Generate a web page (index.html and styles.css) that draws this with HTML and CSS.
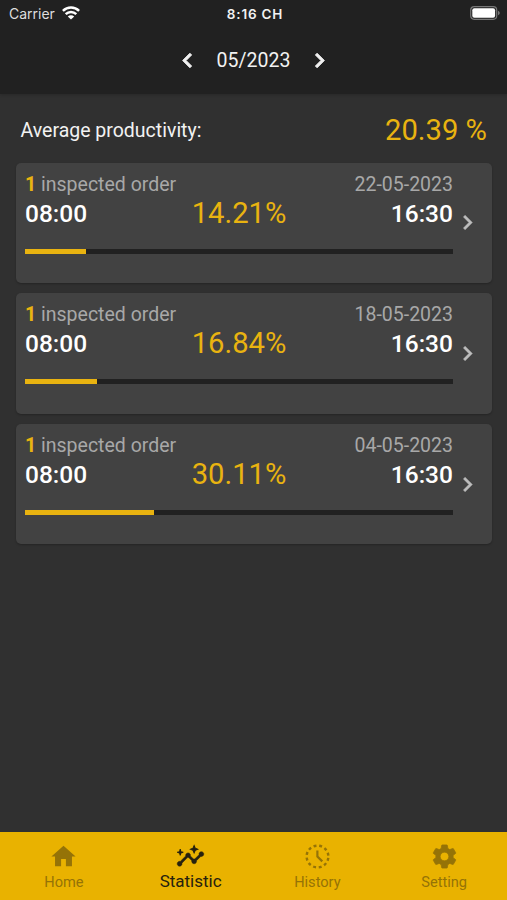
FILE: index.html
```
<!DOCTYPE html>
<html lang="en">
<head>
    <meta charset="UTF-8">
    <meta name="viewport" content="width=device-width, initial-scale=1.0">
    <title>Statistic</title>
    <link rel="stylesheet" href="styles.css">
</head>
<body>
    <header class="header">
        <div class="status-bar">
            <div class="carrier">
                <span>Carrier</span>
                <svg class="wifi" viewBox="0 0 18 14">
                    <path d="M.9 4.8C5.5 .4 12.5 .4 17.1 4.8M3.7 8.1c3-2.9 7.6-2.9 10.6 0" fill="none" stroke="#fff" stroke-width="2.5"/>
                    <path d="M9 13.6l-3.2-3.2c1.8-1.6 4.6-1.6 6.4 0z" fill="#fff"/>
                </svg>
            </div>
            <div class="clock">8:16 CH</div>
            <svg class="battery" viewBox="0 0 30 14">
                <rect x=".7" y=".7" width="26" height="12.6" rx="3.5" fill="none" stroke="#777" stroke-width="1.2"/>
                <rect x="2.3" y="2.3" width="22.8" height="9.4" rx="2" fill="#fff"/>
                <path d="M28 4.8c2.3.8 2.3 3.6 0 4.4z" fill="#777"/>
            </svg>
        </div>
        <div class="month-picker">
            <svg class="chevron" viewBox="0 0 24 24"><path d="M15.41 7.41 14 6l-6 6 6 6 1.41-1.41L10.83 12z"/></svg>
            <span class="month">05/2023</span>
            <svg class="chevron" viewBox="0 0 24 24"><path d="M10 6 8.59 7.41 13.17 12l-4.58 4.59L10 18l6-6z"/></svg>
        </div>
    </header>

    <main class="content">
        <div class="average">
            <span class="average-label">Average productivity:</span>
            <span class="average-value">20.39 %</span>
        </div>

        <div class="card">
            <div class="card-body">
                <div class="row">
                    <span><b class="count">1</b> inspected order</span>
                    <span>22-05-2023</span>
                </div>
                <div class="times">
                    <span class="time">08:00</span>
                    <span class="percent">14.21%</span>
                    <span class="time">16:30</span>
                </div>
                <div class="progress"><div class="progress-bar" style="width: 14.21%"></div></div>
            </div>
            <svg class="chevron" viewBox="0 0 24 24"><path d="M10 6 8.59 7.41 13.17 12l-4.58 4.59L10 18l6-6z"/></svg>
        </div>

        <div class="card">
            <div class="card-body">
                <div class="row">
                    <span><b class="count">1</b> inspected order</span>
                    <span>18-05-2023</span>
                </div>
                <div class="times">
                    <span class="time">08:00</span>
                    <span class="percent">16.84%</span>
                    <span class="time">16:30</span>
                </div>
                <div class="progress"><div class="progress-bar" style="width: 16.84%"></div></div>
            </div>
            <svg class="chevron" viewBox="0 0 24 24"><path d="M10 6 8.59 7.41 13.17 12l-4.58 4.59L10 18l6-6z"/></svg>
        </div>

        <div class="card">
            <div class="card-body">
                <div class="row">
                    <span><b class="count">1</b> inspected order</span>
                    <span>04-05-2023</span>
                </div>
                <div class="times">
                    <span class="time">08:00</span>
                    <span class="percent">30.11%</span>
                    <span class="time">16:30</span>
                </div>
                <div class="progress"><div class="progress-bar" style="width: 30.11%"></div></div>
            </div>
            <svg class="chevron" viewBox="0 0 24 24"><path d="M10 6 8.59 7.41 13.17 12l-4.58 4.59L10 18l6-6z"/></svg>
        </div>
    </main>

    <nav class="tabs">
        <div class="tab">
            <svg viewBox="0 0 24 24"><path d="M10 20v-6h4v6h5v-8h3L12 3 2 12h3v8z"/></svg>
            <span>Home</span>
        </div>
        <div class="tab active">
            <svg viewBox="0 0 24 24">
                <path class="trend" d="M21 8c-1.45 0-2.26 1.44-1.93 2.51l-3.55 3.56c-.3-.09-.74-.09-1.04 0l-2.55-2.55C12.27 10.45 11.46 9 10 9c-1.45 0-2.27 1.44-1.93 2.52l-4.56 4.55C2.44 15.74 1 16.55 1 18c0 1.1.9 2 2 2 1.45 0 2.26-1.44 1.93-2.51l4.55-4.56c.3.09.74.09 1.04 0l2.55 2.55C12.73 16.55 13.54 18 15 18c1.45 0 2.27-1.44 1.93-2.52l3.56-3.55C21.56 12.26 23 11.45 23 10c0-1.1-.9-2-2-2z"/>
                <path class="sparkle" d="M15 9l.94-2.07L18 6l-2.06-.93L15 3l-.92 2.07L12 6l2.08.93zM3.5 11L4 9l2-.5L4 8l-.5-2L3 8l-2 .5L3 9z"/>
            </svg>
            <span>Statistic</span>
        </div>
        <div class="tab">
            <svg viewBox="0 0 24 24">
                <circle class="dashes" cx="12" cy="12" r="9"/>
                <path d="M12.8 7h-1.8v5.41l4.29 4.29 1.3-1.3-3.79-3.8z"/>
            </svg>
            <span>History</span>
        </div>
        <div class="tab">
            <svg class="gear" viewBox="0 0 24 24"><path d="M19.14 12.94c.04-.3.06-.61.06-.94 0-.32-.02-.64-.07-.94l2.03-1.58c.18-.14.23-.41.12-.61l-1.92-3.32c-.12-.22-.37-.29-.59-.22l-2.39.96c-.5-.38-1.03-.7-1.62-.94l-.36-2.54c-.04-.24-.24-.41-.48-.41h-3.84c-.24 0-.43.17-.47.41l-.36 2.54c-.59.24-1.13.57-1.62.94l-2.39-.96c-.22-.08-.47 0-.59.22L2.74 8.87c-.12.21-.08.47.12.61l2.03 1.58c-.05.3-.09.63-.09.94s.02.64.07.94l-2.03 1.58c-.18.14-.23.41-.12.61l1.92 3.32c.12.22.37.29.59.22l2.39-.96c.5.38 1.03.7 1.62.94l.36 2.54c.05.24.24.41.48.41h3.84c.24 0 .44-.17.47-.41l.36-2.54c.59-.24 1.13-.56 1.62-.94l2.39.96c.22.08.47 0 .59-.22l1.92-3.32c.12-.22.07-.47-.12-.61l-2.01-1.58zM12 15.6c-1.98 0-3.6-1.62-3.6-3.6s1.62-3.6 3.6-3.6 3.6 1.62 3.6 3.6-1.62 3.6-3.6 3.6z"/></svg>
            <span>Setting</span>
        </div>
    </nav>
</body>
</html>
```
FILE: styles.css
```
* {
    box-sizing: border-box;
}

body {
    display: flex;
    flex-direction: column;
    height: 100vh;
    margin: 0;
    overflow: hidden;
    background-color: #303030;
    color: #f2f2f2;
    font-family: Roboto, sans-serif;
    font-size: 19.5px;
}

svg {
    display: block;
    flex: none;
    fill: currentColor;
}

.header {
    height: 94px;
    flex: none;
    background-color: #212121;
    box-shadow: 0 1px 3px rgba(0, 0, 0, 0.2);
}

.status-bar {
    display: grid;
    grid-template-columns: 1fr auto 1fr;
    align-items: center;
    height: 27px;
    padding: 0 7px 0 9px;
    font-family: Inter, sans-serif;
    font-size: 14px;
}

.carrier {
    display: flex;
    align-items: center;
    gap: 7px;
    color: #dedede;
}

.wifi {
    width: 18px;
    height: 14px;
    margin-top: -2px;
}

.clock {
    font-size: 13.5px;
    font-weight: 600;
    letter-spacing: 0.8px;
    margin-right: -1px;
}

.battery {
    width: 30px;
    height: 14px;
    margin-top: -1px;
    justify-self: end;
}

.month-picker {
    display: flex;
    justify-content: center;
    align-items: center;
    gap: 15px;
    height: 66px;
}

.chevron {
    width: 29px;
    height: 29px;
    stroke: currentColor;
    stroke-width: 0.4;
}

.month-picker .chevron {
    stroke-width: 0.8;
}

.content {
    flex: 1;
    padding: 0 15px 0 15.5px;
}

.average {
    display: flex;
    justify-content: space-between;
    align-items: center;
    height: 68.5px;
    padding: 4px 5px 0;
}

.average-label {
    padding-top: 1px;
}

.average-value, .percent {
    color: #e9b310;
    font-size: 29.2px;
}

.card {
    display: flex;
    align-items: center;
    height: 120.4px;
    margin-bottom: 10.3px;
    padding-left: 9.5px;
    border-radius: 5px;
    background-color: #424242;
    box-shadow: 0 1px 2px rgba(0, 0, 0, 0.25);
}

.card-body {
    width: 428px;
    height: 100%;
    padding-top: 10px;
}

.card .chevron {
    color: #bdbdbd;
}

.row {
    display: flex;
    justify-content: space-between;
    line-height: 23px;
    color: #a8a8a8;
}

.count {
    color: #e9b310;
}

.times {
    display: flex;
    justify-content: space-between;
    align-items: center;
    height: 34px;
}

.time {
    padding-top: 1px;
    color: #fff;
    font-size: 24.5px;
    font-weight: 500;
}

.progress {
    height: 5px;
    margin-top: 19px;
    background-color: #212121;
}

.progress-bar {
    height: 100%;
    background-color: #e9b310;
}

.tabs {
    display: flex;
    height: 68px;
    flex: none;
    background-color: #e9b200;
}

.tab {
    display: flex;
    flex: 1;
    flex-direction: column;
    align-items: center;
    padding: 10px 0 0 1px;
    color: #957307;
    font-size: 14.6px;
}

.tab svg {
    width: 29px;
    height: 29px;
}

.tab span {
    line-height: 22px;
}

.tab.active {
    color: #26210f;
}

.tab.active span {
    font-size: 17px;
    line-height: 20px;
}

.trend {
    stroke: currentColor;
    stroke-width: 0.4;
}

.sparkle {
    stroke: currentColor;
    stroke-width: 0.9;
}

.gear {
    stroke: currentColor;
    stroke-width: 0.6;
}

.dashes {
    fill: none;
    stroke: currentColor;
    stroke-width: 2;
    stroke-dasharray: 2.4 2.312;
    stroke-dashoffset: -1.156;
}
```
